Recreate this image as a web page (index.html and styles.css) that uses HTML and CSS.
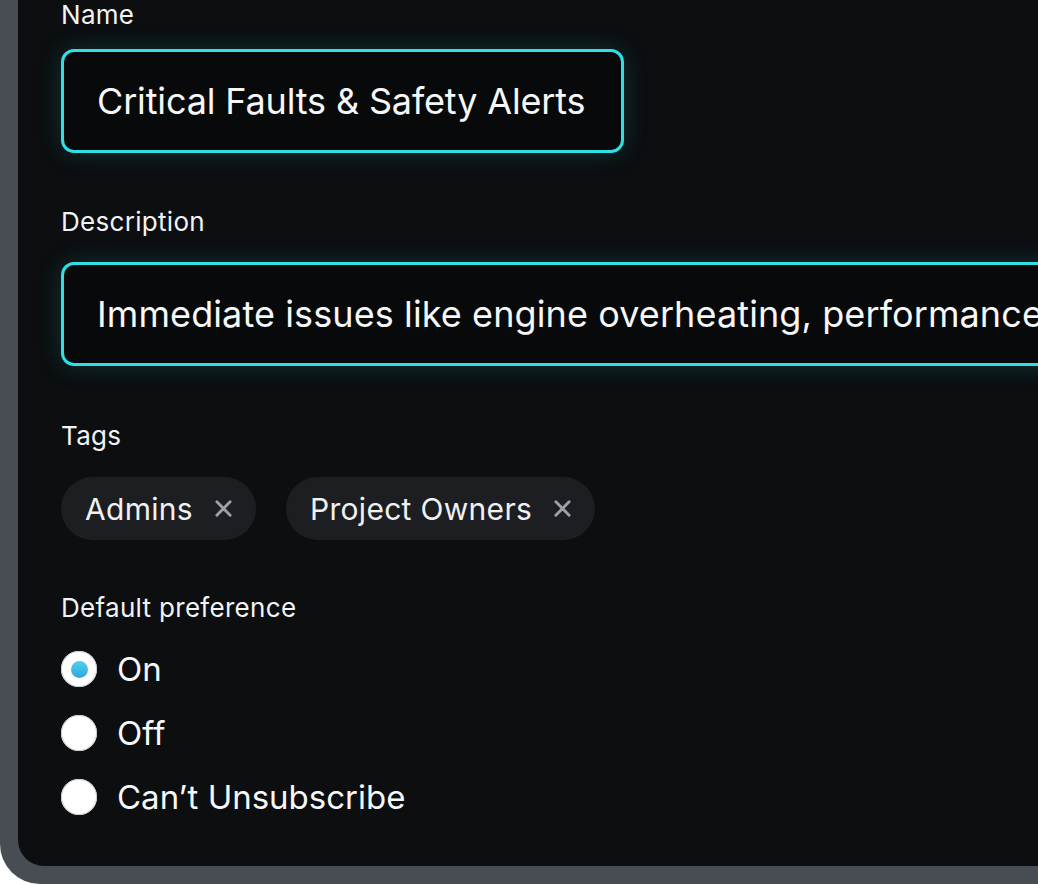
FILE: index.html
```html
<!DOCTYPE html>
<html>
<head>
<meta charset="utf-8">
<link rel="stylesheet" href="styles.css">
</head>
<body>
<div class="frame">
  <div class="panel">
    <div class="field">
      <div class="label">Name</div>
      <div class="input input-name">Critical Faults &amp; Safety Alerts</div>
    </div>
    <div class="field">
      <div class="label">Description</div>
      <div class="input input-desc">Immediate issues like engine overheating, performance drops and safety alerts</div>
    </div>
    <div class="field">
      <div class="label">Tags</div>
      <div class="tags">
        <div class="chip"><span>Admins</span>
          <svg class="x" viewBox="0 0 20 20" width="20" height="20"><path d="M3 3L17 17M17 3L3 17" stroke="currentColor" stroke-width="3" stroke-linecap="round"/></svg>
        </div>
        <div class="chip"><span>Project Owners</span>
          <svg class="x" viewBox="0 0 20 20" width="20" height="20"><path d="M3 3L17 17M17 3L3 17" stroke="currentColor" stroke-width="3" stroke-linecap="round"/></svg>
        </div>
      </div>
    </div>
    <div class="field">
      <div class="label">Default preference</div>
      <div class="radios">
        <div class="radio checked"><span class="dot"></span><span>On</span></div>
        <div class="radio"><span class="dot"></span><span>Off</span></div>
        <div class="radio"><span class="dot"></span><span>Can’t Unsubscribe</span></div>
      </div>
    </div>
  </div>
</div>
</body>
</html>
```
FILE: styles.css
```css
html, body {
  margin: 0;
  padding: 0;
  background: #ffffff;
  overflow: hidden;
}
body {
  font-family: Inter, "Noto Sans", sans-serif;
  color: #ffffff;
}
.frame {
  width: 1020px;
  height: 866px;
  background: #474d53;
  padding: 0 0 18px 18px;
  border-bottom-left-radius: 40px;
  overflow: hidden;
}
.panel {
  height: 866px;
  background: #0c0e10;
  border-bottom-left-radius: 26px;
  padding-left: 43px;
  box-sizing: border-box;
  display: flex;
  flex-direction: column;
  overflow: hidden;
}
.field {
  display: flex;
  flex-direction: column;
}
.label {
  font-size: 26px;
  line-height: 30px;
  letter-spacing: 0.3px;
  color: #f2f3f4;
}
.input {
  box-sizing: border-box;
  height: 104px;
  border: 3px solid #2ee0e6;
  border-radius: 13px;
  background: #08090a;
  box-shadow: 0 0 26px rgba(46, 224, 230, 0.16);
  font-size: 36px;
  line-height: 98px;
  padding-left: 33px;
  white-space: nowrap;
  overflow: hidden;
  color: #f6f7f8;
}
.input-name {
  width: 563px;
  margin-top: 19px;
  letter-spacing: -0.15px;
}
.input-desc {
  width: 1020px;
  margin-top: 25px;
  letter-spacing: 0.1px;
  border-right: none;
  border-radius: 13px 0 0 13px;
}
.field:nth-child(2) {
  margin-top: 54px;
}
.field:nth-child(3) {
  margin-top: 55px;
}
.field:nth-child(4) {
  margin-top: 53px;
}
.tags {
  display: flex;
  gap: 30px;
  margin-top: 26px;
}
.chip {
  display: flex;
  align-items: center;
  height: 63px;
  border-radius: 32px;
  background: #1c1e21;
  padding: 0 23px 0 24px;
  gap: 21px;
  font-size: 30px;
  letter-spacing: 0.3px;
  color: #f0f1f2;
}
.chip .x {
  color: #9aa1aa;
  width: 19px;
  height: 19px;
}
.radios {
  display: flex;
  flex-direction: column;
  gap: 28px;
  margin-top: 28px;
}
.radio {
  display: flex;
  align-items: center;
  gap: 20px;
  height: 36px;
  font-size: 33px;
  color: #f6f7f8;
}
.dot {
  width: 36px;
  height: 36px;
  border-radius: 50%;
  background: #ffffff;
  box-shadow: inset 0 0 0 1px #c9cdd2;
  display: flex;
  align-items: center;
  justify-content: center;
  flex-shrink: 0;
}
.radio.checked .dot::after {
  content: "";
  width: 17px;
  height: 17px;
  border-radius: 50%;
  background: linear-gradient(180deg, #4fd0f0, #2aa8d8);
}
```
